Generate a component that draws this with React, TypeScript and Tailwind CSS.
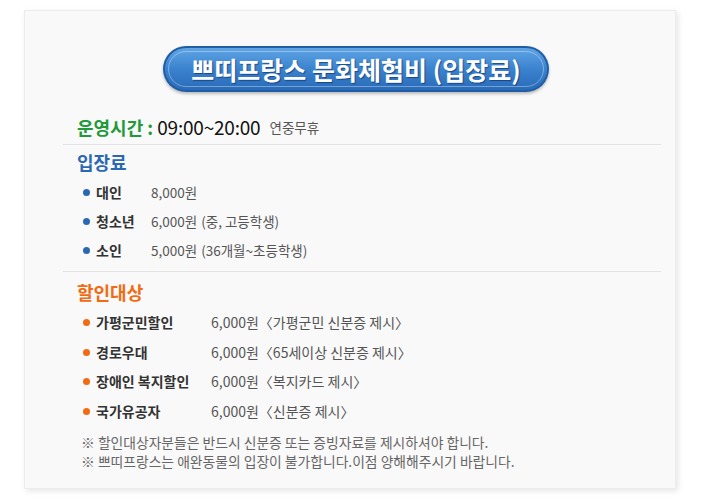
import React from 'react';

const feeItems = [
  { label: '대인', price: '8,000원', note: '' },
  { label: '청소년', price: '6,000원', note: '(중, 고등학생)' },
  { label: '소인', price: '5,000원', note: '(36개월~초등학생)' },
];

const discountItems = [
  { label: '가평군민할인', note: '가평군민 신분증 제시' },
  { label: '경로우대', note: '65세이상 신분증 제시' },
  { label: '장애인 복지할인', note: '복지카드 제시' },
  { label: '국가유공자', note: '신분증 제시' },
];

const font = { fontFamily: '"Noto Sans CJK KR", "Noto Sans", sans-serif' };

const App: React.FC = () => {
  return (
    <div className="w-[710px] h-[503px] bg-white pl-[24px] pt-[10px]" style={font}>
      <div className="w-[652px] h-[479px] bg-[#f9f9f9] border border-[#ececec] shadow-[2px_2px_6px_rgba(0,0,0,0.10)] flex flex-col">
        {/* Title pill */}
        <div className="mt-[35px] ml-[138px] w-[386px] h-[46px] rounded-full bg-[#1f5ea6] p-[2px] shadow-[0_2px_3px_rgba(0,0,0,0.25)]">
          <div className="w-full h-full rounded-full bg-gradient-to-b from-[#5fa5e4] via-[#3b82cf] to-[#2a6bb8] p-[3px]">
            <div className="w-full h-full rounded-full border border-white/35 flex items-center justify-center">
              <span className="text-white font-bold text-[25px] leading-none [text-shadow:1px_1px_1px_rgba(0,40,90,0.6)]">
                쁘띠프랑스 문화체험비 (입장료)
              </span>
            </div>
          </div>
        </div>

        {/* Hours */}
        <div className="mt-[23px] ml-[52px] h-[24px] flex items-center">
          <span className="text-[#22993a] font-bold text-[18px]">운영시간 :</span>
          <span className="ml-[4px] text-[#111] text-[19px] tracking-[-0.2px]">09:00~20:00</span>
          <span className="ml-[9px] text-[#555] text-[13.5px]">연중무휴</span>
        </div>

        <div className="mt-[5px] ml-[38px] w-[598px] h-px bg-[#e3e3e3]" />

        {/* Fees */}
        <div className="mt-[6px] ml-[52px] h-[22px] flex items-center text-[#2a68b3] font-bold text-[18px]">
          입장료
        </div>
        <div className="mt-[5px] flex flex-col">
          {feeItems.map((it) => (
            <div key={it.label} className="h-[29px] pl-[58px] flex items-center text-[14px]">
              <span className="w-[7px] h-[7px] rounded-full bg-[#2a68b3]" />
              <span className="ml-[6px] w-[55px] font-bold text-[#333]">{it.label}</span>
              <span className="text-[#555] text-[13.5px]">
                {it.price}
                {it.note && <span className="ml-[4px]">{it.note}</span>}
              </span>
            </div>
          ))}
        </div>

        <div className="mt-[6px] ml-[38px] w-[598px] h-px bg-[#e3e3e3]" />

        {/* Discounts */}
        <div className="mt-[9px] ml-[52px] h-[22px] flex items-center text-[#f26b12] font-bold text-[18px]">
          할인대상
        </div>
        <div className="mt-[5px] flex flex-col">
          {discountItems.map((it) => (
            <div key={it.label} className="h-[29.5px] pl-[58px] flex items-center text-[14px]">
              <span className="w-[7px] h-[7px] rounded-full bg-[#f26b12]" />
              <span className="ml-[6px] w-[115px] font-bold text-[#333]">{it.label}</span>
              <span className="text-[#555]">6,000원〈{it.note}〉</span>
            </div>
          ))}
        </div>

        {/* Notes */}
        <div className="mt-[7px] ml-[56px] text-[13.8px] leading-[19px] text-[#666]">
          <p>※ 할인대상자분들은 반드시 신분증 또는 증빙자료를 제시하셔야 합니다.</p>
          <p>※ 쁘띠프랑스는 애완동물의 입장이 불가합니다.이점 양해해주시기 바랍니다.</p>
        </div>
      </div>
    </div>
  );
};

export default App;
